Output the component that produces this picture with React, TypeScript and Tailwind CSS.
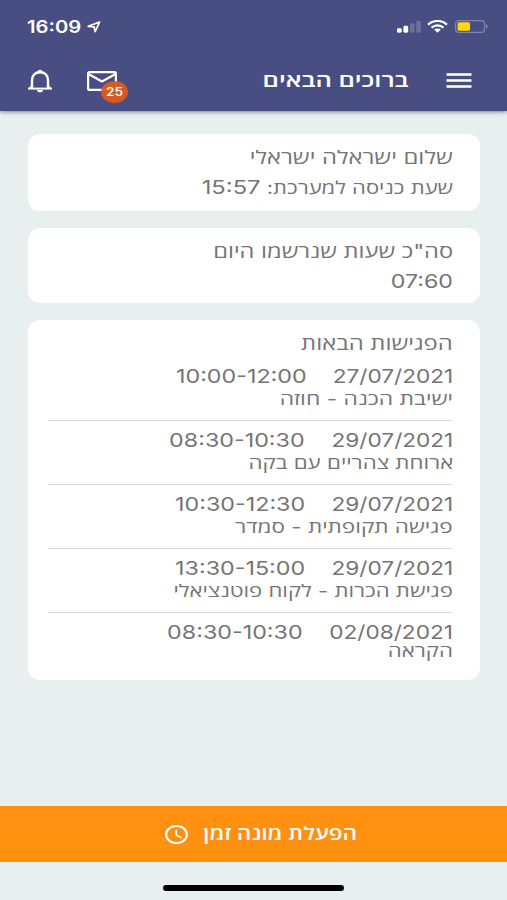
import React from "react";

interface Meeting {
  date: string, hours: string, title: string, titleScale: string, dateWidth: string,
}

const meetings: Meeting[] = [
  { date: "27/07/2021", hours: "10:00-12:00", title: "ישיבת הכנה - חוזה", titleScale: "scale-x-[1.343]", dateWidth: "w-[146px]" },
  { date: "29/07/2021", hours: "08:30-10:30", title: "ארוחת צהריים עם בקה", titleScale: "scale-x-[1.31]", dateWidth: "w-[148px]" },
  { date: "29/07/2021", hours: "10:30-12:30", title: "פגישה תקופתית - סמדר", titleScale: "scale-x-[1.322]", dateWidth: "w-[148px]" },
  { date: "29/07/2021", hours: "13:30-15:00", title: "פגישת הכרות - לקוח פוטנציאלי", titleScale: "scale-x-[1.3]", dateWidth: "w-[148px]" },
  { date: "02/08/2021", hours: "08:30-10:30", title: "הקראה", titleScale: "scale-x-[1.305]", dateWidth: "w-[150px]" },
];

function StatusBar() {
  return (
    <div dir="ltr" className="flex items-center justify-between h-[53px] pl-[27px] pr-[19px]">
      <div className="flex items-center gap-[6px]">
        <p className="w-[54px] text-[17px] leading-6 font-semibold whitespace-nowrap"><span className="inline-block origin-left scale-x-[1.19]">16:09</span></p>
        <svg width="14" height="12" viewBox="0 0 14 12" fill="none" stroke="currentColor" strokeWidth="1.7" strokeLinejoin="round">
          <path d="M12.6 1 1.2 5.3l6 .5.9 4.9z" />
        </svg>
      </div>
      <div className="flex items-center">
        <svg width="24" height="13" viewBox="0 0 24 13" fill="currentColor">
          <rect x="0" y="8.3" width="4.8" height="4.4" rx="1.4" />
          <rect x="6.4" y="5.8" width="4.8" height="6.9" rx="1.4" />
          <rect x="13" y="3.2" width="4.6" height="9.5" rx="1.2" opacity=".2" />
          <rect x="19.2" y="0.7" width="4.6" height="12" rx="1.2" opacity=".2" />
        </svg>
        <svg className="ml-[6px]" width="21" height="13" viewBox="0 0 21 13" fill="none" stroke="currentColor" strokeWidth="2.2">
          <path d="M1 4.6C6.5-.3 14.5-.3 20 4.6" />
          <path d="M4.5 7.6c3.5-3 8.5-3 12 0" />
          <path d="M7.1 9.5c2-1.5 4.8-1.5 6.8 0L10.5 12.8z" fill="currentColor" stroke="none" />
        </svg>
        <svg className="ml-[7px]" width="33" height="13" viewBox="0 0 33 13" fill="none">
          <rect x=".6" y=".6" width="29" height="11.8" rx="3.5" stroke="#8085b0" strokeWidth="1.2" />
          <rect x="2.6" y="2.2" width="12.4" height="8.6" rx="1.5" fill="#ffd60a" />
          <path d="M31 4.3c2.2.6 2.2 3.8 0 4.4z" fill="#8085b0" />
        </svg>
      </div>
    </div>
  )
}

function Header() {
  return (
    <header className="h-[111px] text-white bg-[#484e82] shadow-[0_1px_4px_rgba(0,0,0,0.45)]">
      <StatusBar />
      <div className="flex items-center justify-between h-[55px] pl-[28px] pr-[35px]">
        <div className="flex items-center">
          <svg width="26" height="17" viewBox="0 0 26 17" stroke="currentColor" strokeWidth="2.3">
            <path d="M.5 2.5h25M.5 8.5h25M.5 14.5h25" />
          </svg>
          <h1 className="w-[147px] mr-[37px] -ml-px text-[19px] leading-7 font-semibold whitespace-nowrap"><span className="inline-block origin-right scale-x-[1.345]">ברוכים הבאים</span></h1>
        </div>
        <div className="flex items-center gap-[35px]">
          <div className="relative">
            <svg width="30" height="20" viewBox="0 0 30 20" fill="none" stroke="currentColor" strokeWidth="2.2" strokeLinejoin="round">
              <rect x="1.1" y="1.1" width="27.8" height="17.8" rx="1.5" />
              <path d="M1.5 3 15 10.5 28.5 3" />
            </svg>
            <div className="absolute left-[14px] top-[10px] flex items-center justify-center w-[27px] h-[22px] bg-[#dc5a1c]/95 rounded-[50%]">
              <span className="text-[12px] font-medium scale-x-[1.15]">25</span>
            </div>
          </div>
          <svg width="24" height="24" viewBox="0 0 24 24" fill="none" stroke="currentColor" strokeWidth="2.4">
            <path d="M4 19.5V11C4 6.2 7.3 3.3 12 3.3S20 6.2 20 11v8.5" />
            <path d="M0 19.6h24" strokeWidth="2" />
            <path d="M9.5 3.5a2.5 2.7 0 0 1 5 0zM9 21h6c0 1.5-1.3 2.3-3 2.3S9 22.5 9 21z" fill="currentColor" stroke="none" />
            <path d="M4 15.5v3.5H1zM20 15.5v3.5h3z" fill="currentColor" stroke="none" />
          </svg>
        </div>
      </div>
    </header>
  )
}

function MeetingRow({ date, hours, title, titleScale, dateWidth }: Meeting) {
  return (
    <li className="h-[64.1px] pt-[9px] border-b border-[#dedede] last:border-0 last:[&>p]:mt-0 last:[&>p]:leading-[14px]">
      <div className="flex h-[22px] text-[19px] leading-[22px] whitespace-nowrap">
        <span className={dateWidth}><span dir="ltr" className="inline-block origin-right scale-x-[1.19]">{date}</span></span>
        <span dir="ltr" className="inline-block origin-right scale-x-[1.225]">{hours}</span>
      </div>
      <p className="mt-px text-[17px] leading-[20px] whitespace-nowrap"><span className={`inline-block origin-right ${titleScale}`}>{title}</span></p>
    </li>
  )
}

export default function App() {
  return (
    <div dir="rtl" className="flex flex-col w-[507px] h-[900px] overflow-hidden bg-[#e7efef] text-[#757575] font-['Inter','Open_Sans',sans-serif]">
      <Header />
      <main className="flex flex-col flex-1 pl-[28px] pr-[27px] pt-[23px] gap-[17px]">
        <section className="h-[77px] px-[27px] pt-[9px] bg-white rounded-xl text-[18px] leading-[30px] whitespace-nowrap">
          <p className="h-[30px]"><span className="inline-block origin-right scale-x-[1.32]">שלום ישראלה ישראלי</span></p>
          <p className="h-[30px]"><span className="inline-block origin-right scale-x-[1.25] text-[17.6px]">שעת כניסה למערכת: <span className="text-[19px]">15:57</span></span></p>
        </section>
        <section className="h-[75px] px-[27px] pt-[9px] bg-white rounded-xl text-[18px] leading-[30px] whitespace-nowrap">
          <p className="h-[30px]"><span className="inline-block origin-right scale-x-[1.31]">סה"כ שעות שנרשמו היום</span></p>
          <p className="h-[30px] text-[19px]"><span className="inline-block origin-right scale-x-[1.22]">07:60</span></p>
        </section>
        <section className="h-[360px] pl-[20px] pr-[27px] pt-[9px] bg-white rounded-xl">
          <h2 className="h-[28px] text-[18px] leading-[30px] whitespace-nowrap"><span className="inline-block origin-right scale-x-[1.322]">הפגישות הבאות</span></h2>
          <ul>
            {meetings.map((meeting, index) => (
              <MeetingRow key={index} {...meeting} />
            ))}
          </ul>
        </section>
      </main>
      <button className="flex items-center justify-center shrink-0 h-[56px] pl-[15px] text-white bg-[#ff9010]">
        <span className="w-[154px] text-right text-[18px] leading-7 font-semibold whitespace-nowrap"><span className="inline-block origin-right scale-x-[1.26]">הפעלת מונה זמן</span></span>
        <svg className="mr-[15px]" width="23" height="19" viewBox="2 2 20 20" preserveAspectRatio="none" fill="currentColor">
          <path d="M11.99 2C6.47 2 2 6.48 2 12s4.47 10 9.99 10C17.52 22 22 17.52 22 12S17.52 2 11.99 2zM12 20c-4.42 0-8-3.58-8-8s3.58-8 8-8 8 3.58 8 8-3.58 8-8 8zm.5-13H11v6l5.25 3.15.75-1.23-4.5-2.67z" />
        </svg>
      </button>
      <footer className="flex justify-center shrink-0 h-[38px] pt-[23px]">
        <div className="w-[181px] h-[6px] bg-black rounded-full"></div>
      </footer>
    </div>
  )
}
